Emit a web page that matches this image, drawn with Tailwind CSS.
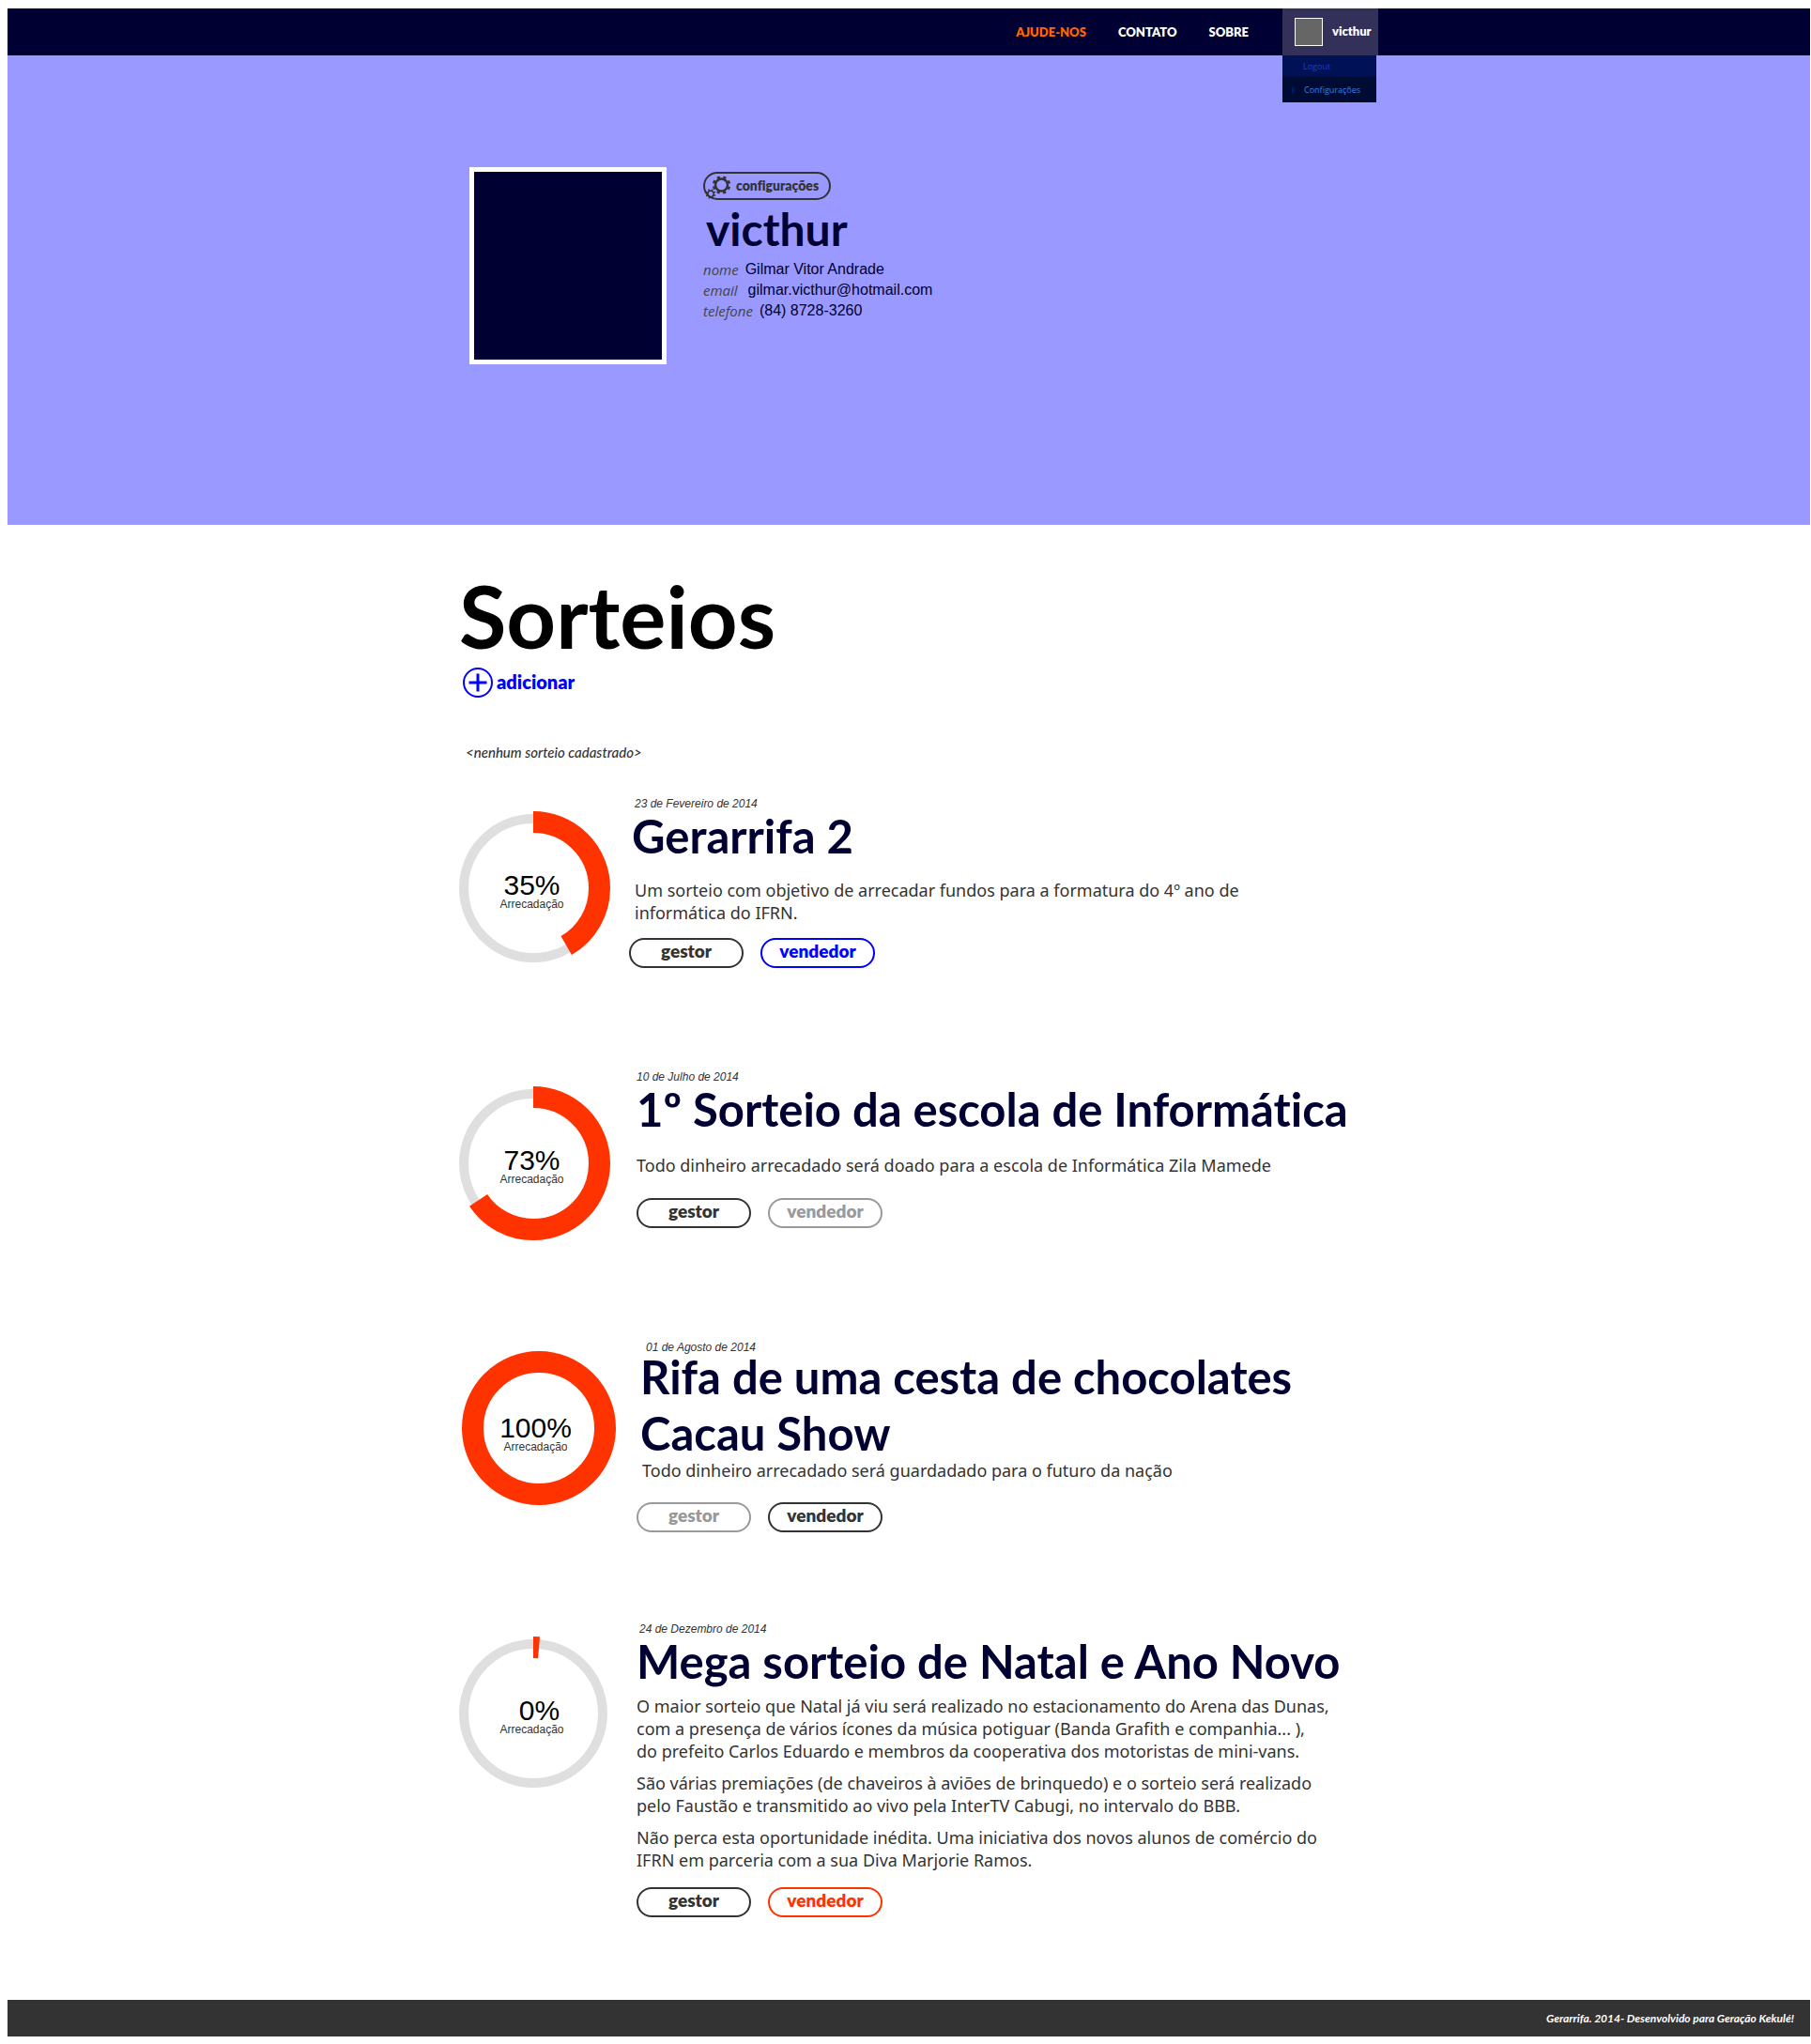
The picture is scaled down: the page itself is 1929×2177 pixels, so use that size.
<!DOCTYPE html>
<html lang="pt-BR">
<head>
<meta charset="utf-8">
<meta name="viewport" content="width=device-width, initial-scale=1">
<title>Gerarrifa</title>
<script src="https://cdn.jsdelivr.net/npm/@tailwindcss/browser@4"></script>
</head>
<body class="bg-white pt-[9px] pr-px pb-2 pl-2 font-['Lato',sans-serif] text-[#333] [font-variant-ligatures:none]">

<header class="bg-[#000033]">
  <div class="mx-auto flex h-[50px] max-w-[1000px] items-center justify-end">
    <nav class="mr-9 flex items-center gap-[34px] text-[13px] leading-5 font-extrabold text-white">
      <a href="#" class="text-[#ff6600]">AJUDE-NOS</a>
      <a href="#">CONTATO</a>
      <a href="#">SOBRE</a>
    </nav>
    <div class="relative h-full w-[102px] bg-[#333059]">
      <button type="button" class="flex h-full w-full items-center gap-[10px] pl-[13px] text-[13px] font-extrabold text-white">
        <span class="size-[30px] border border-white bg-[#666]"></span>victhur
      </button>
      <ul class="absolute top-full left-0 w-[100px] font-['Open_Sans',sans-serif] text-[9px]">
        <li class="flex h-[23px] items-center bg-[#001155] pl-[22px] text-[#1540d8]"><a href="#">Logout</a></li>
        <li class="flex h-[27px] items-center bg-[#000b33] pl-[10px] text-[#3a80e0]">
          <svg class="mr-[9px] h-2 w-1" viewBox="0 0 4 8" aria-hidden="true"><path d="M0 0L4 4L0 8Z" fill="#001a66"/></svg>
          <a href="#">Configurações</a>
        </li>
      </ul>
    </div>
  </div>
</header>

<section class="bg-[#9999ff] pt-[119px] pb-[171px]">
  <div class="mx-auto flex max-w-[1000px] gap-[39px] pl-8">
    <div class="size-[210px] shrink-0 border-5 border-white bg-[#000033]"></div>
    <div class="pt-[5px] text-[#000033]">
      <button type="button" class="relative flex h-[30px] w-[136px] items-center rounded-full border-2 border-[#333] pb-[2px] pl-[33px] text-[14px] font-extrabold text-[#333]">
        <svg class="absolute top-px left-0 h-7 w-8" viewBox="0 0 32 28" fill="none" stroke="#333" aria-hidden="true">
          <circle cx="17.500" cy="11" r="6.500" stroke-width="2.500"/>
          <circle cx="17.500" cy="11" r="8.500" stroke-width="2.500" pathLength="80" stroke-dasharray="5 5" transform="rotate(12 17.500 11)"/>
          <circle cx="6" cy="20.500" r="3.200" stroke-width="1.500"/>
          <circle cx="6" cy="20.500" r="4.500" stroke-width="1.800" pathLength="80" stroke-dasharray="4 6" transform="rotate(12 6 20.500)"/>
        </svg>
        configurações
      </button>
      <h1 class="mt-[3px] pl-[3px] text-[48px] leading-[56px] font-bold">victhur</h1>
      <dl class="mt-1 font-['Liberation_Sans',sans-serif] text-[16px] leading-[22px]">
        <div class="flex gap-[7px]"><dt class="font-['Open_Sans',sans-serif] text-[15px] text-[#444] italic">nome</dt><dd>Gilmar Vitor Andrade</dd></div>
        <div class="flex gap-[11px]"><dt class="font-['Open_Sans',sans-serif] text-[15px] text-[#444] italic">email</dt><dd>gilmar.victhur@hotmail.com</dd></div>
        <div class="flex gap-[7px]"><dt class="font-['Open_Sans',sans-serif] text-[15px] text-[#444] italic">telefone</dt><dd>(84) 8728-3260</dd></div>
      </dl>
    </div>
  </div>
</section>

<main class="mx-auto max-w-[1000px] pt-[49px] pl-[18px]">
  <h2 class="pl-[3px] text-[92px] leading-[96px] font-bold text-black">Sorteios</h2>
  <button type="button" class="mt-[7px] ml-[7px] flex h-8 items-center gap-1 text-[20px] leading-7 font-extrabold text-[#0000ff]">
    <svg class="size-8" viewBox="0 0 32 32" fill="none" stroke="currentColor" aria-hidden="true"><circle cx="16" cy="16" r="15" stroke-width="2"/><path d="M16 6.500V25.500M6.500 16H25.500" stroke-width="3"/></svg>
    <span class="pb-[2px]">adicionar</span>
  </button>
  <p class="mt-[46px] ml-[10px] text-[15px] leading-6 font-medium italic">&lt;nenhum sorteio cadastrado&gt;</p>

  <article class="mt-[37px] flex gap-[23px]">
    <div class="relative mt-[14px] size-[164px] shrink-0">
      <svg class="size-full" viewBox="0 0 164 164" fill="none" aria-hidden="true">
        <circle cx="82" cy="82" r="74" stroke="#dfdfdf" stroke-width="10"/>
        <circle cx="82" cy="82" r="70.500" stroke="#ff3300" stroke-width="23" pathLength="360" stroke-dasharray="150 360" transform="rotate(-90 82 82)"/>
      </svg>
      <p class="absolute inset-x-0 top-[65px] flex flex-col items-center pr-[3px] font-['Liberation_Sans',sans-serif]"><span class="text-[30px] leading-7 text-black">35%</span><span class="text-[12px] leading-3">Arrecadação</span></p>
    </div>
    <div>
      <time datetime="2014-02-23" class="block pl-[3px] font-['Liberation_Sans',sans-serif] text-[12px] leading-3 italic">23 de Fevereiro de 2014</time>
      <h3 class="text-[49px] leading-[56px] font-bold text-[#000033]">Gerarrifa 2</h3>
      <p class="mt-[18px] pl-[3px] font-['Noto_Sans',sans-serif] text-[18px] leading-6">Um sorteio com objetivo de arrecadar fundos para a formatura do 4º ano de<br>informática do IFRN.</p>
      <div class="mt-[15px] -ml-[3px] flex gap-[18px] text-[19px] leading-6 font-extrabold">
        <button type="button" class="h-8 w-[122px] rounded-full border-2 border-[#333] pb-1">gestor</button>
        <button type="button" class="h-8 w-[122px] rounded-full border-2 border-[#0000ff] pb-1 text-[#0000ff]">vendedor</button>
      </div>
    </div>
  </article>

  <article class="mt-[110px] flex gap-7">
    <div class="relative mt-4 size-[164px] shrink-0">
      <svg class="size-full" viewBox="0 0 164 164" fill="none" aria-hidden="true">
        <circle cx="82" cy="82" r="74" stroke="#dfdfdf" stroke-width="10"/>
        <circle cx="82" cy="82" r="70.500" stroke="#ff3300" stroke-width="23" pathLength="360" stroke-dasharray="236 360" transform="rotate(-90 82 82)"/>
      </svg>
      <p class="absolute inset-x-0 top-[65px] flex flex-col items-center pr-[3px] font-['Liberation_Sans',sans-serif]"><span class="text-[30px] leading-7 text-black">73%</span><span class="text-[12px] leading-3">Arrecadação</span></p>
    </div>
    <div>
      <time datetime="2014-07-10" class="block font-['Liberation_Sans',sans-serif] text-[12px] leading-3 italic">10 de Julho de 2014</time>
      <h3 class="text-[49px] leading-[56px] font-bold text-[#000033]">1º Sorteio da escola de Informática</h3>
      <p class="mt-5 font-['Noto_Sans',sans-serif] text-[18px] leading-6">Todo dinheiro arrecadado será doado para a escola de Informática Zila Mamede</p>
      <div class="mt-[23px] flex gap-[18px] text-[19px] leading-6 font-extrabold">
        <button type="button" class="h-8 w-[122px] rounded-full border-2 border-[#333] pb-1">gestor</button>
        <button type="button" disabled class="h-8 w-[122px] rounded-full border-2 border-[#999] pb-1 text-[#999]">vendedor</button>
      </div>
    </div>
  </article>

  <article class="mt-[108px] flex gap-7">
    <div class="relative mt-[10px] ml-[6px] -mr-[6px] size-[164px] shrink-0">
      <svg class="size-full" viewBox="0 0 164 164" fill="none" aria-hidden="true">
        <circle cx="82" cy="82" r="70.500" stroke="#ff3300" stroke-width="23"/>
      </svg>
      <p class="absolute inset-x-0 top-[68px] flex flex-col items-center pr-[7px] font-['Liberation_Sans',sans-serif]"><span class="text-[30px] leading-7 text-black">100%</span><span class="text-[12px] leading-3">Arrecadação</span></p>
    </div>
    <div>
      <time datetime="2014-08-01" class="block pl-[10px] font-['Liberation_Sans',sans-serif] text-[12px] leading-3 italic">01 de Agosto de 2014</time>
      <h3 class="-mt-[5px] pl-1 text-[49px] leading-[60px] font-bold text-[#000033]">Rifa de uma cesta de chocolates<br>Cacau Show</h3>
      <p class="-mt-[2px] pl-[6px] font-['Noto_Sans',sans-serif] text-[18px] leading-6">Todo dinheiro arrecadado será guardadado para o futuro da nação</p>
      <div class="mt-[22px] flex gap-[18px] text-[19px] leading-6 font-extrabold">
        <button type="button" disabled class="h-8 w-[122px] rounded-full border-2 border-[#999] pb-1 text-[#999]">gestor</button>
        <button type="button" class="h-8 w-[122px] rounded-full border-2 border-[#333] pb-1">vendedor</button>
      </div>
    </div>
  </article>

  <article class="mt-[97px] flex gap-7">
    <div class="relative mt-[14px] size-[164px] shrink-0">
      <svg class="size-full" viewBox="0 0 164 164" fill="none" aria-hidden="true">
        <circle cx="82" cy="82" r="74" stroke="#dfdfdf" stroke-width="10"/>
        <circle cx="82" cy="82" r="70.500" stroke="#ff3300" stroke-width="23" pathLength="360" stroke-dasharray="5 360" transform="rotate(-90 82 82)"/>
      </svg>
      <p class="absolute inset-x-0 top-[65px] flex flex-col items-center pr-[3px] font-['Liberation_Sans',sans-serif]"><span class="pl-4 text-[30px] leading-7 text-black">0%</span><span class="text-[12px] leading-3">Arrecadação</span></p>
    </div>
    <div>
      <time datetime="2014-12-24" class="block pl-[3px] font-['Liberation_Sans',sans-serif] text-[12px] leading-3 italic">24 de Dezembro de 2014</time>
      <h3 class="text-[49px] leading-[56px] font-bold text-[#000033]">Mega sorteio de Natal e Ano Novo</h3>
      <div class="mt-2 flex flex-col gap-[10px] font-['Noto_Sans',sans-serif] text-[18px] leading-6">
        <p>O maior sorteio que Natal já viu será realizado no estacionamento do Arena das Dunas,<br>com a presença de vários ícones da música potiguar (Banda Grafith e companhia... ),<br>do prefeito Carlos Eduardo e membros da cooperativa dos motoristas de mini-vans.</p>
        <p>São várias premiações (de chaveiros à aviões de brinquedo) e o sorteio será realizado<br>pelo Faustão e transmitido ao vivo pela InterTV Cabugi, no intervalo do BBB.</p>
        <p>Não perca esta oportunidade inédita. Uma iniciativa dos novos alunos de comércio do<br>IFRN em parceria com a sua Diva Marjorie Ramos.</p>
      </div>
      <div class="mt-[17px] flex gap-[18px] text-[19px] leading-6 font-extrabold">
        <button type="button" class="h-8 w-[122px] rounded-full border-2 border-[#333] pb-1">gestor</button>
        <button type="button" class="h-8 w-[122px] rounded-full border-2 border-[#ff3300] pb-1 text-[#ff3300]">vendedor</button>
      </div>
    </div>
  </article>
</main>

<footer class="mt-[88px] flex h-[39px] items-center justify-end bg-[#333] pr-[17px] text-[12px] font-bold text-white italic">Gerarrifa. 2014- Desenvolvido para Geração Kekulé!</footer>
</body>
</html>
